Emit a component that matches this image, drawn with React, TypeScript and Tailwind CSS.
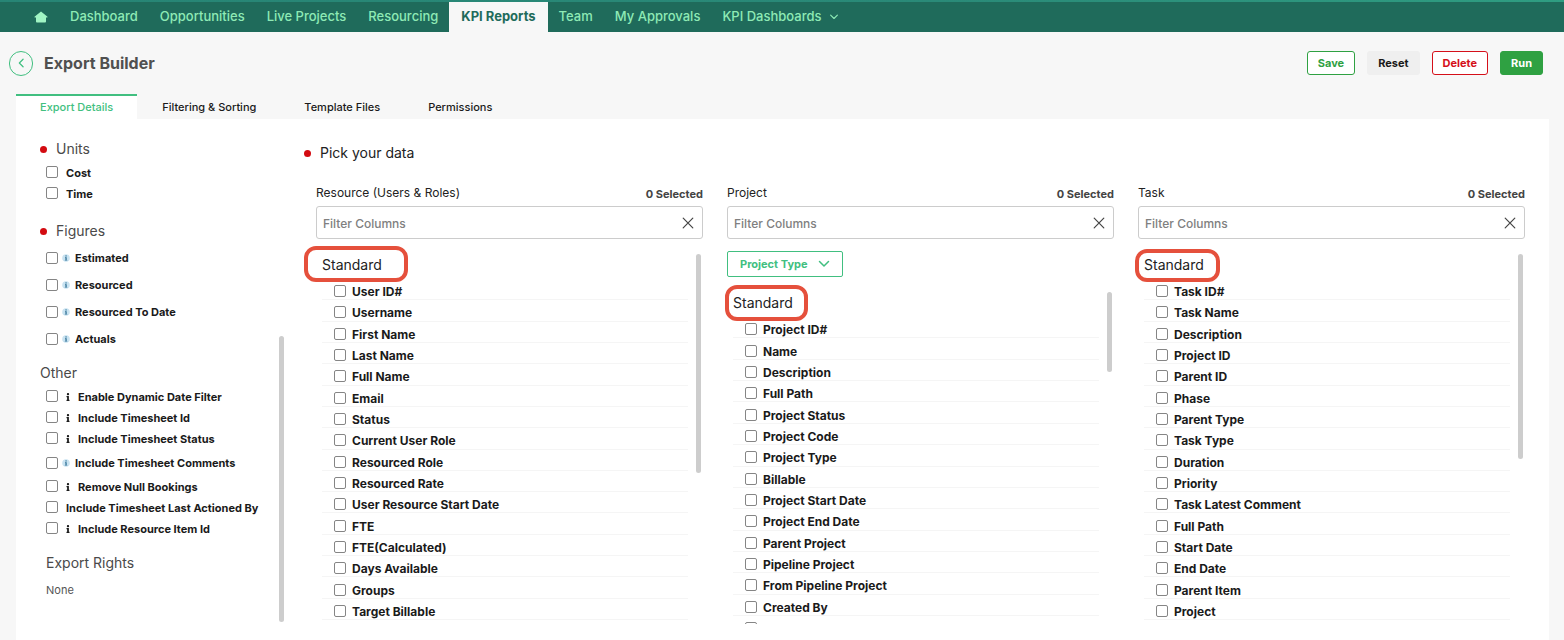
import { useId } from "react";
import { FaInfo } from "react-icons/fa";

const NAV_BEFORE = ["Dashboard", "Opportunities", "Live Projects", "Resourcing"];
const NAV_AFTER = ["Team", "My Approvals"];
const TABS = ["Filtering & Sorting", "Template Files", "Permissions"];

const RESOURCE_FIELDS = [
  "User ID#", "Username", "First Name", "Last Name", "Full Name", "Email", "Status", "Current User Role",
  "Resourced Role", "Resourced Rate", "User Resource Start Date", "FTE", "FTE(Calculated)", "Days Available",
  "Groups", "Target Billable",
];
const PROJECT_FIELDS = [
  "Project ID#", "Name", "Description", "Full Path", "Project Status", "Project Code", "Project Type", "Billable",
  "Project Start Date", "Project End Date", "Parent Project", "Pipeline Project", "From Pipeline Project", "Created By",
];
const TASK_FIELDS = [
  "Task ID#", "Task Name", "Description", "Project ID", "Parent ID", "Phase", "Parent Type", "Task Type",
  "Duration", "Priority", "Task Latest Comment", "Full Path", "Start Date", "End Date", "Parent Item", "Project",
];

type Hint = "none" | "plain" | "badge";

function HomeIcon() {
  return (
    <svg viewBox="0 0 14 12" className="h-3 w-3.5" fill="currentColor" aria-hidden="true">
      <path d="M7 .4 13.5 5.7q.3.6-.4.7H12v4.2q0 .9-.9.9H2.9q-.9 0-.9-.9V6.4H.9q-.7-.1-.4-.7z" />
    </svg>
  );
}

function Chevron({ className }: { className: string }) {
  return (
    <svg viewBox="0 0 12 8" className={className} fill="none" stroke="currentColor" strokeWidth="1.5" strokeLinecap="round" strokeLinejoin="round" aria-hidden="true">
      <path d="M1.5 1.5 6 6l4.5-4.5" />
    </svg>
  );
}

function InfoBadge() {
  return (
    <svg viewBox="0 0 8 8" className="ml-1 mr-[5px] size-2 shrink-0" aria-hidden="true">
      <circle cx="4" cy="4" r="3.8" fill="#c9e3f1" />
      <rect x="3.4" y="1.4" width="1.3" height="1.1" fill="#2f6f94" />
      <path d="M3 3.2h1.7v2.7h.6v.7H2.8v-.7h.6V3.9H3z" fill="#2f6f94" />
    </svg>
  );
}

function Checkbox({ id, className = "" }: { id: string; className?: string }) {
  return (
    <input
      id={id}
      type="checkbox"
      className={`size-3 shrink-0 appearance-none rounded-[2px] border border-[#858585] bg-white checked:bg-[#2fa142] ${className}`}
    />
  );
}

function Option({ label, hint = "none", tall = false }: { label: string; hint?: Hint; tall?: boolean }) {
  const id = useId();
  return (
    <li className={`flex items-center ${tall ? "h-[27px] pb-0.5" : "h-[21px]"}`}>
      <Checkbox id={id} className={tall ? "" : "mb-[3px]"} />
      {hint === "badge" && <InfoBadge />}
      {hint === "plain" && <FaInfo className="mr-1.5 mb-0.5 ml-1.5 size-2 shrink-0" aria-hidden="true" />}
      <label
        htmlFor={id}
        className={`text-[11px] font-bold leading-4 whitespace-nowrap ${tall ? "" : "mb-0.5"} ${hint === "none" ? "ml-2" : ""}`}
      >
        {label}
      </label>
    </li>
  );
}

function Dot() {
  return <span className="size-[7px] shrink-0 rounded-full bg-[#d30b11]" />;
}

function SideHeading({ children, required = false }: { children: string; required?: boolean }) {
  return (
    <h2 className="flex h-6 items-center gap-[9px] text-sm text-[#4a4a4a]">
      {required && <Dot />}
      {children}
    </h2>
  );
}

function FieldRow({ label }: { label: string }) {
  const id = useId();
  return (
    <li className="flex min-h-0 flex-1 items-center gap-1.5 border-b border-[#f5f5f5] pt-1 pl-3">
      <Checkbox id={id} />
      <label htmlFor={id} className="pt-0.5 text-xs font-bold leading-[14px]">{label}</label>
    </li>
  );
}

interface ColumnProps {
  title: string;
  fields: string[];
  markClass: string;
  listClass: string;
  thumbClass: string;
  filter?: string;
  partialRow?: boolean;
}

function DataColumn({ title, fields, markClass, listClass, thumbClass, filter, partialRow }: ColumnProps) {
  const id = useId();
  return (
    <section className="min-w-0 flex-1">
      <div className="flex h-6 items-center justify-between">
        <label htmlFor={id} className="pt-0.5 text-xs text-[#222]">{title}</label>
        <span className="pt-1 text-[11px] font-bold leading-4 text-[#444]">0 Selected</span>
      </div>
      <div className="mt-0.5 flex h-[33px] items-center rounded-[3px] border border-[#ccc] pr-2 pl-1.5">
        <input id={id} type="text" placeholder="Filter Columns" className="min-w-0 flex-1 bg-transparent pt-0.5 text-xs font-medium outline-none placeholder:text-[#808080]" />
        <button type="button" aria-label={`Clear ${title} filter`}>
          <svg viewBox="0 0 12 12" className="size-3" stroke="#444" strokeWidth="1.2" strokeLinecap="round" aria-hidden="true">
            <path d="m1.2 1.2 9.6 9.6M10.8 1.2l-9.6 9.6" />
          </svg>
        </button>
      </div>
      {filter && (
        <button type="button" className="mt-3 flex h-[26px] items-center gap-2.5 rounded-[2px] border border-[#41bf80] px-3 text-[11px] font-bold text-[#41bf80]">
          {filter}
          <Chevron className="h-2 w-3" />
        </button>
      )}
      <div className="mt-3 flex justify-between">
        <div className="min-w-0 flex-1 pr-2 pl-1.5">
          <h3 className="relative flex h-7 w-fit items-center text-sm text-[#222]">
            Standard
            <span className={`pointer-events-none absolute rounded-xl border-4 border-[#e5503c] ${markClass}`} />
          </h3>
          <ul className={`flex flex-col ${listClass}`}>
            {fields.map((field) => <FieldRow key={field} label={field} />)}
          </ul>
          {partialRow && (
            <div className="h-2 overflow-hidden pt-1.5 pl-3">
              <Checkbox id={`${id}-next`} className="block" />
            </div>
          )}
        </div>
        <div className={`mt-[3px] mr-0.5 w-[5px] shrink-0 rounded-full bg-[#cdcdcd] ${thumbClass}`} />
      </div>
    </section>
  );
}

export default function App() {
  return (
    <div className="flex min-h-screen flex-col bg-[#f7f7f7] font-['Inter',sans-serif] text-[#1a1a1a]">
      <nav className="bg-[#1f6b5b] text-[13px] font-medium text-[#8eeab5]">
        <div className="h-0.5 bg-linear-to-r from-[#278575] via-[#2a8a78] via-60% to-[#2f9d82]" />
        <div className="flex h-[30px] items-stretch pl-[23px]">
          <a href="#home" aria-label="Home" className="flex items-center px-[11px] text-[#a0f5c4]"><HomeIcon /></a>
          {NAV_BEFORE.map((item) => (
            <a key={item} href="#nav" className="flex items-center px-[11px]">{item}</a>
          ))}
          <a href="#kpi" aria-current="page" className="flex items-center bg-[#f7f7f7] px-3 font-bold text-[#1f6b5b]">KPI Reports</a>
          {NAV_AFTER.map((item) => (
            <a key={item} href="#nav" className="flex items-center px-[11px]">{item}</a>
          ))}
          <button type="button" className="flex items-center gap-2 px-[11px]">
            KPI Dashboards
            <Chevron className="h-1.5 w-2.5" />
          </button>
        </div>
      </nav>

      <header className="flex h-[62px] items-center justify-between pr-[21px] pl-[9px]">
        <div className="flex items-center gap-[11px]">
          <button type="button" aria-label="Back" className="flex h-[25px] w-6 items-center justify-center rounded-full border border-[#41bf80] text-[#41bf80]">
            <Chevron className="h-2 w-2.5 rotate-90" />
          </button>
          <h1 className="text-base font-bold text-[#505050]">Export Builder</h1>
        </div>
        <div className="flex gap-3 text-[11px] font-bold">
          <button type="button" className="h-6 rounded-[3px] border border-[#2fa142] bg-white px-2.5 text-[#2fa142]">Save</button>
          <button type="button" className="h-6 rounded-[3px] border border-[#efefef] bg-[#efefef] px-2.5">Reset</button>
          <button type="button" className="h-6 rounded-[3px] border border-[#d5101a] bg-white px-2.5 text-[#d5101a]">Delete</button>
          <button type="button" className="h-6 rounded-[3px] border border-[#2fa142] bg-[#2fa142] px-2.5 text-white">Run</button>
        </div>
      </header>

      <div className="mx-4 flex h-[25px] text-[11px] font-medium">
        <button type="button" className="mr-px border-t-2 border-[#41bf80] bg-white px-6 text-[#41bf80]">Export Details</button>
        {TABS.map((tab) => (
          <button key={tab} type="button" className="border-t-2 border-transparent px-6">{tab}</button>
        ))}
      </div>

      <main className="mr-[15px] ml-4 flex flex-1 items-start bg-white">
        <aside className="flex w-[268px] shrink-0 justify-between pt-[18px] pl-6">
          <div>
            <SideHeading required>Units</SideHeading>
            <ul className="mt-0.5 pl-1.5">
              <Option label="Cost" />
              <Option label="Time" />
            </ul>
            <div className="mt-3.5">
              <SideHeading required>Figures</SideHeading>
              <ul className="mt-0.5 pl-1.5">
                <Option label="Estimated" hint="badge" tall />
                <Option label="Resourced" hint="badge" tall />
                <Option label="Resourced To Date" hint="badge" tall />
                <Option label="Actuals" hint="badge" tall />
              </ul>
            </div>
            <div className="mt-2">
              <SideHeading>Other</SideHeading>
              <ul className="mt-0.5 pl-1.5">
                <Option label="Enable Dynamic Date Filter" hint="plain" />
                <Option label="Include Timesheet Id" hint="plain" />
                <Option label="Include Timesheet Status" hint="plain" />
                <Option label="Include Timesheet Comments" hint="badge" tall />
                <Option label="Remove Null Bookings" hint="plain" />
                <Option label="Include Timesheet Last Actioned By" />
                <Option label="Include Resource Item Id" hint="plain" />
              </ul>
            </div>
            <div className="mt-[11px] pl-1.5">
              <SideHeading>Export Rights</SideHeading>
              <p className="mt-[7px] text-[11px] leading-4 text-[#555]">None</p>
            </div>
          </div>
          <div className="mt-[199px] h-[286px] w-[5px] rounded-full bg-[#cdcdcd]" />
        </aside>

        <div className="min-w-0 flex-1 pt-[22px] pr-6 pl-5">
          <h2 className="flex h-6 items-center gap-[9px] text-sm text-[#222]">
            <Dot />
            Pick your data
          </h2>
          <div className="mt-[15px] flex gap-6 pl-3">
            <DataColumn title="Resource (Users & Roles)" fields={RESOURCE_FIELDS} markClass="-top-[5px] -left-[18px] h-9 w-[104px]" listClass="h-[341px]" thumbClass="h-[219px]" />
            <DataColumn title="Project" fields={PROJECT_FIELDS} markClass="-top-1 -left-2 h-9 w-[83px]" listClass="h-[299px]" thumbClass="h-20" filter="Project Type" partialRow />
            <DataColumn title="Task" fields={TASK_FIELDS} markClass="-top-[2px] -left-[9px] h-[33px] w-[85px]" listClass="h-[341px]" thumbClass="h-[205px]" />
          </div>
        </div>
      </main>
    </div>
  );
}
